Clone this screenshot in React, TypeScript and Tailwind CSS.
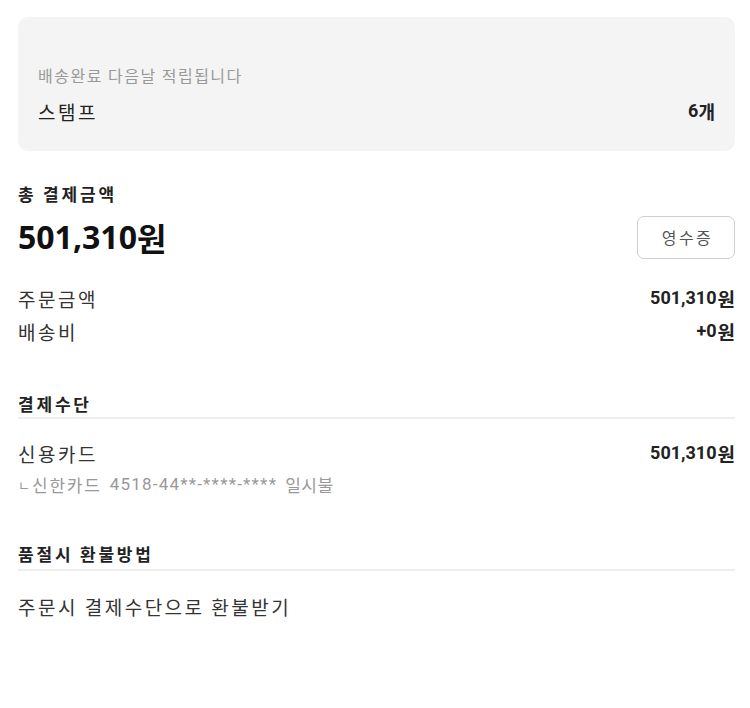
import React from "react";

const base = { fontFamily: 'Roboto, "Noto Sans CJK KR", sans-serif' };
const kr = { fontFamily: '"Noto Sans CJK KR", sans-serif' };

function K({ children, className = "" }: { children: React.ReactNode; className?: string }) {
  return (
    <span className={"leading-none " + className} style={kr}>
      {children}
    </span>
  );
}

function Amount({ value }: { value: string }) {
  return (
    <span className="flex items-center leading-none text-[18px] font-bold text-[#222]">
      {value}
      <K className="ml-[1px] text-[19px]">원</K>
    </span>
  );
}

function Header({ children, divider = true, gap = 3 }: { children: React.ReactNode; divider?: boolean; gap?: number }) {
  return (
    <div>
      <div className="flex h-[22px] items-center">
        <K className="text-[17px] font-bold tracking-[2.8px] text-[#222]">{children}</K>
      </div>
      {divider && (
        <div className={(gap === 3 ? "mt-[3px]" : "mt-[5px]") + " h-[2px] bg-[#eeeeee]"} />
      )}
    </div>
  );
}

export default function App() {
  return (
    <div className="w-[750px] h-[708px] bg-white text-[#333]" style={base}>
      <div className="pt-[17px] pl-[18px] pr-[15px]">
        <div className="h-[134px] rounded-[10px] bg-[#f4f4f4] px-5 pt-[47px]">
          <div className="flex h-[22px] items-center">
            <K className="text-[16px] tracking-[1.5px] text-[#999]">배송완료 다음날 적립됩니다</K>
          </div>
          <div className="mt-[13px] flex h-[24px] items-center justify-between">
            <K className="text-[19px] tracking-[2.5px] text-[#222]">스탬프</K>
            <span className="flex items-center leading-none text-[18px] font-bold text-[#222]">
              6<K className="text-[18px]">개</K>
            </span>
          </div>
        </div>

        <div className="mt-[31px]">
          <Header divider={false}>총 결제금액</Header>
        </div>
        <div className="mt-[11px] flex h-[44px] items-center justify-between">
          <span
            className="flex items-center leading-none text-[32px] font-bold text-[#111]"
            style={{ fontFamily: '"Noto Sans", "Noto Sans CJK KR", sans-serif' }}
          >
            501,310<K className="text-[32px]">원</K>
          </span>
          <button
            className="flex h-[43px] w-[98px] items-center justify-center rounded-[7px] border border-[#cfcfcf] bg-white pl-[3px] text-[16px] leading-none tracking-[2.5px] text-[#555]"
            style={kr}
          >
            영수증
          </button>
        </div>

        <div className="mt-[27px] flex h-[24px] items-center justify-between">
          <K className="text-[19px] tracking-[2.5px]">주문금액</K>
          <Amount value="501,310" />
        </div>
        <div className="mt-[9px] flex h-[24px] items-center justify-between">
          <K className="text-[19px] tracking-[2.5px]">배송비</K>
          <Amount value="+0" />
        </div>

        <div className="mt-[49px]">
          <Header>결제수단</Header>
        </div>
        <div className="mt-[22px] flex h-[24px] items-center justify-between">
          <K className="text-[19px] tracking-[2.5px]">신용카드</K>
          <Amount value="501,310" />
        </div>
        <div className="mt-[8px] flex h-[22px] items-center text-[#999]">
          <K className="text-[13px]">ㄴ</K>
          <K className="ml-[2px] text-[17px] tracking-[1.8px]">신한카드</K>
          <span className="ml-[8px] text-[17px] leading-none tracking-[1.2px]">4518-44**-****-****</span>
          <K className="ml-[8px] text-[17px] tracking-[0.5px]">일시불</K>
        </div>

        <div className="mt-[47px]">
          <Header gap={5}>품절시 환불방법</Header>
        </div>
        <div className="mt-[23px] flex h-[24px] items-center">
          <K className="text-[19px] tracking-[2.5px]">주문시 결제수단으로 환불받기</K>
        </div>
      </div>
    </div>
  );
}
